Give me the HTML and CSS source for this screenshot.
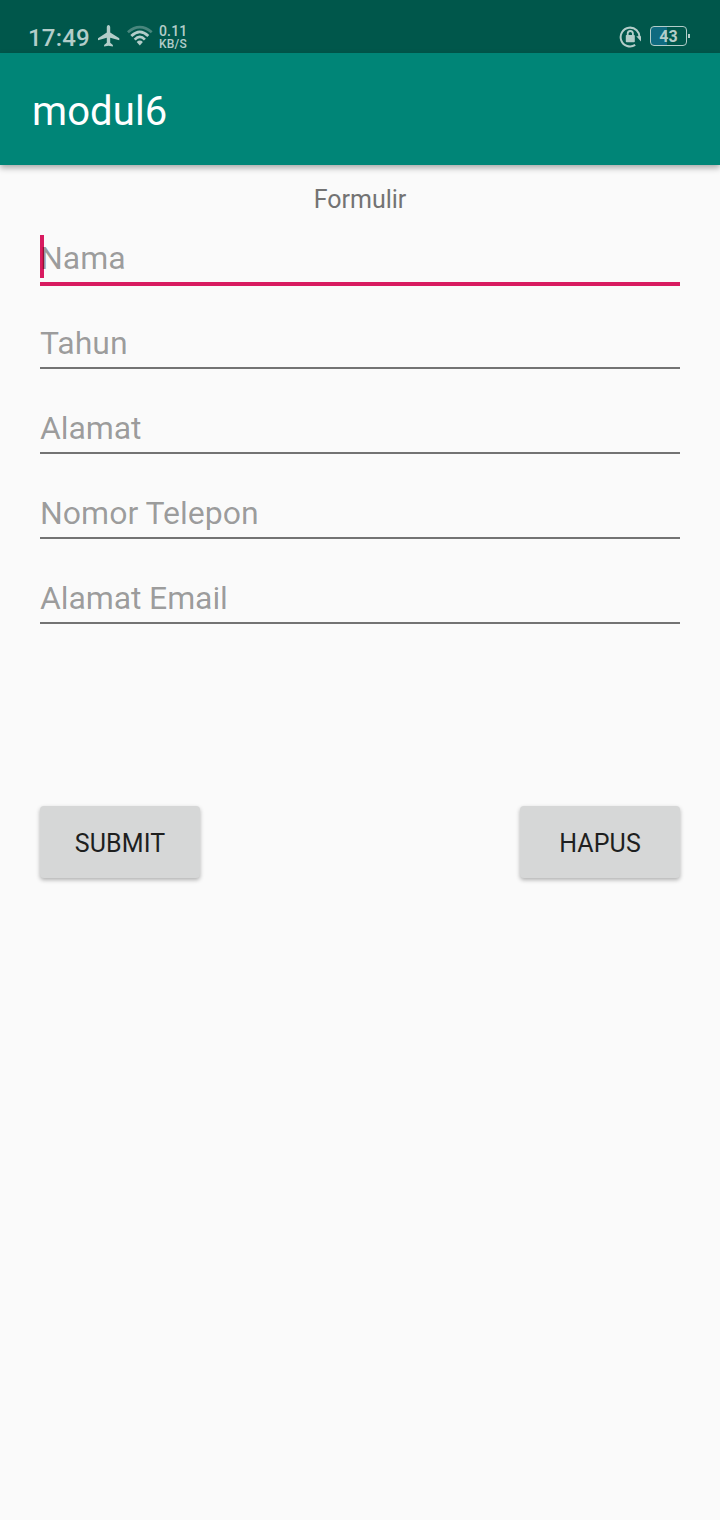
FILE: index.html
```
<!DOCTYPE html>
<html lang="id">
<head>
<meta charset="utf-8">
<title>modul6</title>
<link rel="stylesheet" href="styles.css">
</head>
<body>
<header class="status">
  <span class="time">17:49</span>
  <svg class="plane" width="22" height="22" viewBox="0 0 22 22"><path d="M10.5 0C11.5 0 12.2 1 12.2 2.3V7.6L21.3 13.2V15.3L12.2 12.7V17.8L14.9 20V21.6L10.5 20.8L6.1 21.6V20L8.8 17.8V12.7L0 15.3V13.2L8.8 7.6V2.3C8.8 1 9.5 0 10.5 0Z"/></svg>
  <svg class="wifi" width="26" height="21" viewBox="0 0 26 21"><g fill="none" stroke-width="2.8"><path class="dim" d="M.9 7.2Q12.8-3 24.7 7.2"/><path d="M4.3 10.9Q12.8 2.8 21.3 10.9"/><path d="M7.7 14.6Q12.8 9.3 17.9 14.6"/></g><path d="M9.7 16.9Q12.8 14.2 15.9 16.9L12.8 20.5Z"/></svg>
  <span class="speed"><span class="rate">0.11</span><span class="unit">KB/S</span></span>
  <span class="spacer"></span>
  <svg class="lock" width="22" height="22" viewBox="0 0 22 22"><path fill="none" stroke-width="2" d="M16.2 18.9A9.4 9.4 0 1 1 20.4 12"/><path d="M17.3 10.3H22V15.4Z"/><rect x="6.8" y="9" width="9" height="7.2" rx=".8"/><path fill="none" stroke-width="1.8" d="M8.7 9.6V7.6A2.6 2.6 0 0 1 13.9 7.6V9.6"/></svg>
  <span class="battery">43</span><span class="tip"></span>
</header>
<div class="appbar"><h1 class="title">modul6</h1></div>
<main class="form">
  <h2 class="heading">Formulir</h2>
  <div class="field focused"><span class="hint">Nama</span><span class="caret"></span></div>
  <div class="field"><span class="hint">Tahun</span></div>
  <div class="field"><span class="hint snug">Alamat</span></div>
  <div class="field"><span class="hint">Nomor Telepon</span></div>
  <div class="field"><span class="hint snug">Alamat Email</span></div>
  <div class="actions">
    <button class="button" type="button">SUBMIT</button>
    <button class="button" type="button">HAPUS</button>
  </div>
</main>
</body>
</html>
```
FILE: styles.css
```
* { box-sizing: border-box; }
body {
  margin: 0;
  min-height: 1520px;
  background: #fafafa;
  font-family: Roboto, "Liberation Sans", sans-serif;
}
.status {
  display: flex;
  align-items: flex-start;
  height: 53px;
  padding: 25px 30px 0 28px;
  background: #00574b;
  color: #b3cdc9;
}
.status svg { display: block; flex: none; fill: #b3cdc9; }
.status svg path[fill="none"], .wifi g { stroke: #b3cdc9; }
.status .wifi g { fill: none; }
.wifi .dim { opacity: .4; }
.time { width: 70px; font-size: 24px; line-height: 26px; font-weight: 500; letter-spacing: .2px; }
.wifi { margin: 0 6px 0 7px; }
.speed { display: flex; flex-direction: column; font-weight: 500; }
.rate { font-size: 14px; line-height: 13px; letter-spacing: .15px; }
.unit { font-size: 12px; line-height: 12px; letter-spacing: .2px; }
.spacer { flex: 1; }
.lock { margin: 1px 9px 0 0; }
.status .lock path[fill="none"] { fill: none; }
.battery {
  width: 37px;
  height: 20px;
  margin-top: 1px;
  border: 1px solid #b3cdc9;
  border-radius: 4px;
  background: linear-gradient(to right, #0f6b80 16px, transparent 16px);
  font-size: 16px;
  line-height: 19px;
  font-weight: 700;
  text-align: center;
}
.tip { width: 2px; height: 4px; margin: 9px 0 0 1px; background: #b3cdc9; }
.appbar {
  display: flex;
  align-items: center;
  height: 112px;
  padding: 6px 32px 0;
  background: #008577;
  box-shadow: 0 3px 6px rgba(0, 0, 0, .32);
}
.title { margin: 0; color: #fff; font-size: 40px; line-height: 48px; font-weight: 400; letter-spacing: .1px; }
.form { display: flex; flex-direction: column; padding: 20px 40px 0; }
.heading { margin: 0 0 20px; text-align: center; color: #737373; font-size: 25px; line-height: 30px; font-weight: 400; }
.field {
  position: relative;
  height: 49px;
  margin-bottom: 36px;
  padding-top: 4px;
  border-bottom: 2px solid #737373;
}
.field.focused { height: 51px; margin-bottom: 34px; border-bottom: 4px solid #d81b60; }
.hint { position: relative; z-index: 1; display: block; color: rgba(0, 0, 0, .39); font-size: 32px; line-height: 38px; }
.snug { letter-spacing: -.12px; }
.caret { position: absolute; left: 0; top: 0; width: 4px; height: 43px; background: #d81b60; }
.actions { display: flex; justify-content: space-between; margin-top: 146px; }
.button {
  width: 160px;
  height: 72px;
  padding: 4px 0 0;
  border: 0;
  border-radius: 4px;
  background: #d6d7d7;
  box-shadow: 0 2px 4px rgba(0, 0, 0, .3);
  color: #1e1f1f;
  font: 400 25px/30px Roboto, "Liberation Sans", sans-serif;
  letter-spacing: .1px;
}
```
